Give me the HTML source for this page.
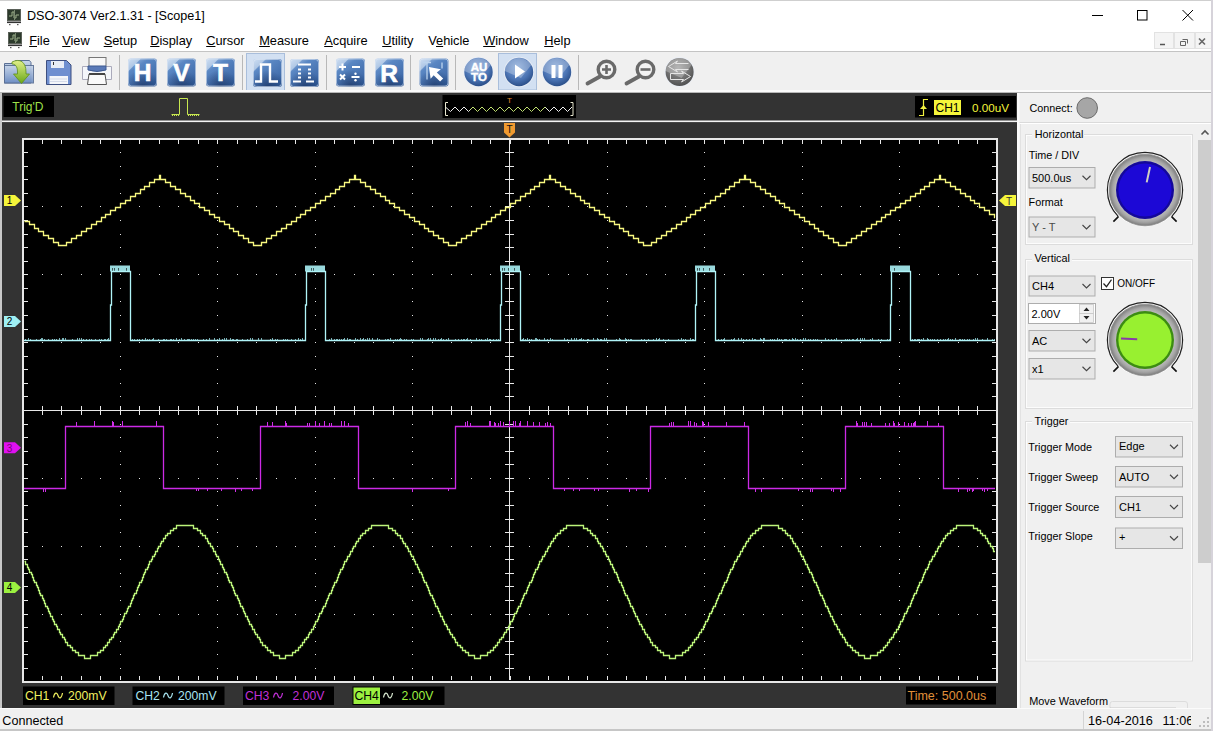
<!DOCTYPE html><html><head><meta charset="utf-8"><style>
*{margin:0;padding:0;box-sizing:border-box}
html,body{width:1213px;height:731px;overflow:hidden;background:#f0f0f0;font-family:"Liberation Sans",sans-serif;position:relative}
.a{position:absolute;white-space:pre}
</style></head><body>
<div class="a" style="left:0;top:0;width:1213px;height:51px;background:#fff"></div>
<div class="a" style="left:0;top:0;width:1213px;height:1px;background:#cfcfcf"></div>
<svg class="a" style="left:6.5px;top:8.5px" width="16" height="17" viewBox="0 0 16 17"><rect x="0.5" y="0.5" width="13" height="11" fill="#2c3a2c" stroke="#5a6058"/><path d="M2 7h3v-4h2v6h2v-3h3" stroke="#9cb08a" stroke-width="1" fill="none"/><rect x="7" y="1" width="1" height="10" fill="#7a8a70"/><rect x="0" y="12.5" width="14" height="1.6" fill="#333"/><rect x="2" y="15" width="1.5" height="1.2" fill="#555"/><rect x="10" y="15" width="1.5" height="1.2" fill="#555"/></svg>
<div class="a" style="left:27px;top:10.13px;font-size:12.6px;line-height:12.6px;color:#000;">DSO-3074 Ver2.1.31 - [Scope1]</div>
<svg class="a" style="left:1085px;top:5px" width="120" height="22" viewBox="1085 5 120 22"><path d="M1092 15.5h11" stroke="#000" stroke-width="1"/><rect x="1137.5" y="10.5" width="9.5" height="9.5" fill="none" stroke="#000" stroke-width="1"/><path d="M1182.5 10l10.5 10.5M1193 10l-10.5 10.5" stroke="#000" stroke-width="1"/></svg>
<svg class="a" style="left:8px;top:32px" width="16" height="17" viewBox="0 0 16 17"><rect x="0.5" y="0.5" width="13" height="11" fill="#2c3a2c" stroke="#5a6058"/><path d="M2 7h3v-4h2v6h2v-3h3" stroke="#9cb08a" stroke-width="1" fill="none"/><rect x="7" y="1" width="1" height="10" fill="#7a8a70"/><rect x="0" y="12.5" width="14" height="1.6" fill="#333"/><rect x="2" y="15" width="1.5" height="1.2" fill="#555"/><rect x="10" y="15" width="1.5" height="1.2" fill="#555"/></svg>
<div class="a" style="left:29.2px;top:35.16px;font-size:12.8px;line-height:12.8px;color:#000;text-underline-offset:0.6px"><u>F</u>ile</div>
<div class="a" style="left:62.2px;top:35.16px;font-size:12.8px;line-height:12.8px;color:#000;text-underline-offset:0.6px"><u>V</u>iew</div>
<div class="a" style="left:103.7px;top:35.16px;font-size:12.8px;line-height:12.8px;color:#000;text-underline-offset:0.6px"><u>S</u>etup</div>
<div class="a" style="left:150.2px;top:35.16px;font-size:12.8px;line-height:12.8px;color:#000;text-underline-offset:0.6px"><u>D</u>isplay</div>
<div class="a" style="left:206.2px;top:35.16px;font-size:12.8px;line-height:12.8px;color:#000;text-underline-offset:0.6px"><u>C</u>ursor</div>
<div class="a" style="left:259.2px;top:35.16px;font-size:12.8px;line-height:12.8px;color:#000;text-underline-offset:0.6px"><u>M</u>easure</div>
<div class="a" style="left:324.2px;top:35.16px;font-size:12.8px;line-height:12.8px;color:#000;text-underline-offset:0.6px"><u>A</u>cquire</div>
<div class="a" style="left:382.2px;top:35.16px;font-size:12.8px;line-height:12.8px;color:#000;text-underline-offset:0.6px"><u>U</u>tility</div>
<div class="a" style="left:428.2px;top:35.16px;font-size:12.8px;line-height:12.8px;color:#000;text-underline-offset:0.6px">V<u>e</u>hicle</div>
<div class="a" style="left:483.2px;top:35.16px;font-size:12.8px;line-height:12.8px;color:#000;text-underline-offset:0.6px"><u>W</u>indow</div>
<div class="a" style="left:544.2px;top:35.16px;font-size:12.8px;line-height:12.8px;color:#000;text-underline-offset:0.6px"><u>H</u>elp</div>
<svg class="a" style="left:1150px;top:30px" width="63" height="21" viewBox="1150 30 63 21"><rect x="1154.5" y="32.5" width="19" height="16" fill="#f4f4f4" stroke="#e2e2e2"/><rect x="1174.5" y="32.5" width="20" height="16" fill="#f4f4f4" stroke="#e2e2e2"/><rect x="1195.5" y="32.5" width="16" height="16" fill="#f4f4f4" stroke="#e2e2e2"/><path d="M1160 44.5h5" stroke="#555" stroke-width="1.5"/><path d="M1180.5 41.5h5v4h-5zM1182.5 39.5h5v4" stroke="#666" stroke-width="1" fill="none"/><path d="M1199 38.5l6 6M1205 38.5l-6 6" stroke="#666" stroke-width="1.6"/></svg>
<div class="a" style="left:0;top:51px;width:1213px;height:1px;background:#c4c4c4"></div>
<div class="a" style="left:0;top:52px;width:1213px;height:41px;background:#f0f0f0"></div>
<svg class="a" style="left:0;top:51px" width="700" height="42" viewBox="0 51 700 42" font-family="Liberation Sans, sans-serif">
<defs>
<linearGradient id="bq" x1="0" y1="0" x2="0.7" y2="1"><stop offset="0" stop-color="#b4cbea"/><stop offset="0.35" stop-color="#5a87c3"/><stop offset="0.8" stop-color="#4570ae"/><stop offset="1" stop-color="#35609e"/></linearGradient>
<radialGradient id="bqs" cx="0.5" cy="1" r="0.6"><stop offset="0" stop-color="#0d2048" stop-opacity="0.55"/><stop offset="1" stop-color="#0d2048" stop-opacity="0"/></radialGradient>
<radialGradient id="cb" cx="0.45" cy="0.35" r="0.7"><stop offset="0" stop-color="#7fa3d6"/><stop offset="0.6" stop-color="#4b74b4"/><stop offset="1" stop-color="#24477f"/></radialGradient>
<radialGradient id="cg" cx="0.45" cy="0.35" r="0.7"><stop offset="0" stop-color="#9a9a9a"/><stop offset="0.6" stop-color="#6e6e6e"/><stop offset="1" stop-color="#4a4a4a"/></radialGradient>
<linearGradient id="fold" x1="0" y1="0" x2="0" y2="1"><stop offset="0" stop-color="#c8d6ea"/><stop offset="1" stop-color="#6f8fc4"/></linearGradient>
<linearGradient id="arr" x1="0" y1="0" x2="0" y2="1"><stop offset="0" stop-color="#e2f08a"/><stop offset="1" stop-color="#6aa818"/></linearGradient>
</defs>
<!-- open -->
<path d="M4.5 63.5h9l2 -3h14l1.5 2v20.5h-26.5z" fill="url(#fold)" stroke="#5a6f94" stroke-width="1"/>
<rect x="4.5" y="65.5" width="29" height="17.5" fill="url(#fold)" stroke="#5a6f94" stroke-width="1" opacity="0.9"/>
<path d="M12 62 C20 58 26 62 26 72 V74 H29.5 L21.5 83.5 L13.5 74 H17.5 V72 C17.5 66 15 64 12 64z" fill="url(#arr)" stroke="#5e8f1a" stroke-width="0.8"/>
<!-- save -->
<path d="M46.5 60.5h20l4.5 4.5v19.5h-24.5z" fill="#6f8fd0" stroke="#3e4f80" stroke-width="1"/>
<rect x="51" y="61" width="13" height="7" fill="#e8edf6"/><rect x="53" y="62" width="1" height="3" fill="#333"/>
<rect x="49.5" y="76" width="18.5" height="8" fill="#f4f6fa"/>
<path d="M50 79h17M50 81.5h17" stroke="#c6cee0" stroke-width="0.7"/>
<!-- print -->
<rect x="89" y="57.5" width="17" height="10" fill="#f8f8f8" stroke="#777" stroke-width="1"/>
<path d="M82.5 66.5h29v13h-29z" fill="#f4f6fa" stroke="#aab" stroke-width="1"/>
<path d="M88 66 h18 v4 q-9 3 -18 0z" fill="#5a7ab8" stroke="#3f5a90"/>
<path d="M89 74 h16 l1.5 10.5 h-19z" fill="#fafafa" stroke="#555" stroke-width="1"/>
<rect x="89" y="73" width="16" height="2" fill="#444"/>
<!-- separators -->
<path d="M119.5 55v35M242.5 55v35M326.5 55v35M410.5 55v35M455.5 55v35M578.5 55v35" stroke="#b8b8b8" stroke-width="1"/>
<!-- H V T -->
<rect x="128" y="58.5" width="29" height="28" rx="3" fill="url(#bq)"/><rect x="128" y="58.5" width="29" height="28" rx="3" fill="url(#bqs)"/><path d="M128 61.5 Q128 58.5 131 58.5 H141 L128 71.5z" fill="#e4eefa" opacity="0.55"/><rect x="128.5" y="59.0" width="28" height="27" rx="3" fill="none" stroke="#dfe8f4" stroke-width="1" opacity="0.6"/>
<text x="142.5" y="81.3" font-size="24.5" font-weight="bold" text-anchor="middle" fill="#fff" stroke="#fff" stroke-width="0.6">H</text>
<rect x="167" y="58.5" width="29" height="28" rx="3" fill="url(#bq)"/><rect x="167" y="58.5" width="29" height="28" rx="3" fill="url(#bqs)"/><path d="M167 61.5 Q167 58.5 170 58.5 H180 L167 71.5z" fill="#e4eefa" opacity="0.55"/><rect x="167.5" y="59.0" width="28" height="27" rx="3" fill="none" stroke="#dfe8f4" stroke-width="1" opacity="0.6"/>
<text x="181.5" y="81.3" font-size="24.5" font-weight="bold" text-anchor="middle" fill="#fff" stroke="#fff" stroke-width="0.6">V</text>
<rect x="206" y="58.5" width="29" height="28" rx="3" fill="url(#bq)"/><rect x="206" y="58.5" width="29" height="28" rx="3" fill="url(#bqs)"/><path d="M206 61.5 Q206 58.5 209 58.5 H219 L206 71.5z" fill="#e4eefa" opacity="0.55"/><rect x="206.5" y="59.0" width="28" height="27" rx="3" fill="none" stroke="#dfe8f4" stroke-width="1" opacity="0.6"/>
<text x="220.5" y="81.3" font-size="24.5" font-weight="bold" text-anchor="middle" fill="#fff" stroke="#fff" stroke-width="0.6">T</text>
<!-- pressed -->
<rect x="246.5" y="53.5" width="38" height="37" fill="#d2e0f2" stroke="#a9bedb" stroke-width="1"/>
<rect x="253" y="59" width="29" height="28" rx="3" fill="url(#bq)"/><rect x="253" y="59" width="29" height="28" rx="3" fill="url(#bqs)"/><path d="M253 62 Q253 59 256 59 H266 L253 72z" fill="#e4eefa" opacity="0.55"/><rect x="253.5" y="59.5" width="28" height="27" rx="3" fill="none" stroke="#dfe8f4" stroke-width="1" opacity="0.6"/>
<path d="M255 81.5h6v-17h9v17h8" stroke="#fff" stroke-width="2.4" fill="none"/>
<rect x="290" y="59" width="29" height="28" rx="3" fill="url(#bq)"/><rect x="290" y="59" width="29" height="28" rx="3" fill="url(#bqs)"/><path d="M290 62 Q290 59 293 59 H303 L290 72z" fill="#e4eefa" opacity="0.55"/><rect x="290.5" y="59.5" width="28" height="27" rx="3" fill="none" stroke="#dfe8f4" stroke-width="1" opacity="0.6"/>
<path d="M293 81.5h8M306 81.5h8M298 64.5h13" stroke="#fff" stroke-width="2" fill="none"/>
<path d="M298 69.5h3M308 69.5h3M298 73.5h3M308 73.5h3M298 77.5h3M308 77.5h3" stroke="#fff" stroke-width="2" fill="none"/>
<!-- math -->
<rect x="336" y="58.5" width="29" height="28" rx="3" fill="url(#bq)"/><rect x="336" y="58.5" width="29" height="28" rx="3" fill="url(#bqs)"/><path d="M336 61.5 Q336 58.5 339 58.5 H349 L336 71.5z" fill="#e4eefa" opacity="0.55"/><rect x="336.5" y="59.0" width="28" height="27" rx="3" fill="none" stroke="#dfe8f4" stroke-width="1" opacity="0.6"/>
<path d="M339 67h7M342.5 63.5v7M352 67h8M340 74.5l5 5M345 74.5l-5 5M351.5 77h8" stroke="#fff" stroke-width="2" fill="none"/>
<circle cx="355.5" cy="73.8" r="1.2" fill="#fff"/><circle cx="355.5" cy="80.2" r="1.2" fill="#fff"/>
<rect x="375" y="58.5" width="29" height="28" rx="3" fill="url(#bq)"/><rect x="375" y="58.5" width="29" height="28" rx="3" fill="url(#bqs)"/><path d="M375 61.5 Q375 58.5 378 58.5 H388 L375 71.5z" fill="#e4eefa" opacity="0.55"/><rect x="375.5" y="59.0" width="28" height="27" rx="3" fill="none" stroke="#dfe8f4" stroke-width="1" opacity="0.6"/>
<text x="389" y="81.5" font-size="24.5" font-weight="bold" text-anchor="middle" fill="#fff" stroke="#fff" stroke-width="0.6">R</text>
<!-- cursor -->
<rect x="419.5" y="58.5" width="29" height="28" rx="3" fill="url(#bq)"/><rect x="419.5" y="58.5" width="29" height="28" rx="3" fill="url(#bqs)"/><path d="M419.5 61.5 Q419.5 58.5 422.5 58.5 H432.5 L419.5 71.5z" fill="#e4eefa" opacity="0.55"/><rect x="420.0" y="59.0" width="28" height="27" rx="3" fill="none" stroke="#dfe8f4" stroke-width="1" opacity="0.6"/>
<path d="M423 62.5h8M427 62.5v17M442 62.5v6" stroke="#bcd4ee" stroke-width="1.3" fill="none"/>
<path d="M430 66 L430 78 L433.5 75 L439 82 L442.5 79.5 L437 72.5 L441.5 70z" fill="#fff" transform="rotate(-8 436 74)"/>
<!-- auto -->
<circle cx="478.5" cy="72" r="15.2" fill="#e8eef6" opacity="0.8"/><circle cx="478.5" cy="72" r="14.2" fill="url(#cb)"/><path d="M464.3 71 L480.5 78 L490.7 65 A14.2 14.2 0 0 0 464.3 71z" fill="#ffffff" opacity="0.28"/>
<text x="479" y="71" font-size="11.5" font-weight="bold" text-anchor="middle" fill="#fff" stroke="#fff" stroke-width="0.4">AU</text>
<text x="479" y="81" font-size="11.5" font-weight="bold" text-anchor="middle" fill="#fff" stroke="#fff" stroke-width="0.4">TO</text>
<rect x="498.5" y="53.5" width="38" height="36.5" fill="#d2e0f2" stroke="#a9bedb" stroke-width="1"/>
<circle cx="519" cy="72" r="15.2" fill="#e8eef6" opacity="0.8"/><circle cx="519" cy="72" r="14.2" fill="url(#cb)"/><path d="M504.8 71 L521 78 L531.2 65 A14.2 14.2 0 0 0 504.8 71z" fill="#ffffff" opacity="0.28"/>
<path d="M515 64.5 L525 71.5 L515 78.5z" fill="#fff"/>
<circle cx="557" cy="72" r="15.2" fill="#e8eef6" opacity="0.8"/><circle cx="557" cy="72" r="14.2" fill="url(#cb)"/><path d="M542.8 71 L559 78 L569.2 65 A14.2 14.2 0 0 0 542.8 71z" fill="#ffffff" opacity="0.28"/>
<rect x="551.5" y="65" width="4" height="13" fill="#fff"/><rect x="558.5" y="65" width="4" height="13" fill="#fff"/>
<!-- zoom -->
<circle cx="606.5" cy="69.5" r="8.3" fill="#f2f2f2" stroke="#6a6a6a" stroke-width="3.4"/>
<path d="M600 76.5 L587.5 83.5" stroke="#6a6a6a" stroke-width="3.8" stroke-linecap="round"/>
<path d="M602 69.5h9M606.5 65v9" stroke="#6a6a6a" stroke-width="2.6"/>
<circle cx="645.5" cy="69.5" r="8.3" fill="#f2f2f2" stroke="#6a6a6a" stroke-width="3.4"/>
<path d="M639 76.5 L626.5 83.5" stroke="#6a6a6a" stroke-width="3.8" stroke-linecap="round"/>
<path d="M640.5 69.5h10" stroke="#6a6a6a" stroke-width="2.6"/>
<circle cx="679.6" cy="72" r="15" fill="#e8eef6" opacity="0.8"/><circle cx="679.6" cy="72" r="14" fill="url(#cg)"/><path d="M665.6 71 L681.6 78 L691.6 65 A14 14 0 0 0 665.6 71z" fill="#ffffff" opacity="0.28"/>
<path d="M688.5 63.5h-13l2 -2.5 -9 5.5 9 5.5 -2 -2.5h13" fill="none" stroke="#e6e6e6" stroke-width="1"/><path d="M670.5 73.5h13l-2 -2.5 9 5.5 -9 5.5 2 -2.5h-13z" fill="none" stroke="#e6e6e6" stroke-width="1"/>
</svg>
<div class="a" style="left:0;top:90px;width:1213px;height:2px;background:#fafafa"></div><div class="a" style="left:0;top:92px;width:1213px;height:1px;background:#b8b8b8"></div>
<svg width="1015" height="615" viewBox="2 93 1015 615" style="position:absolute;left:2px;top:93px" font-family="Liberation Sans, sans-serif">
<defs><linearGradient id="zg" x1="446" x2="572" gradientUnits="userSpaceOnUse"><stop offset="0" stop-color="#f0f0f0"/><stop offset="0.18" stop-color="#f0f0f0"/><stop offset="0.2" stop-color="#c0e070"/><stop offset="0.78" stop-color="#c0e070"/><stop offset="0.8" stop-color="#f0f0f0"/></linearGradient></defs><rect x="2" y="93" width="1015" height="615" fill="#333333"/>
<rect x="2" y="120.5" width="1015" height="1.6" fill="#f4f4f4"/>
<rect x="22" y="138" width="976" height="545" fill="#000"/>
<rect x="23" y="139" width="974" height="543" fill="none" stroke="#e8e8e8" stroke-width="2"/>
<g fill="#e4e4e4" shape-rendering="crispEdges"><rect x="120" y="152" width="1" height="1"/><rect x="120" y="166" width="1" height="1"/><rect x="120" y="179" width="1" height="1"/><rect x="120" y="193" width="1" height="1"/><rect x="120" y="206" width="1" height="1"/><rect x="120" y="220" width="1" height="1"/><rect x="120" y="234" width="1" height="1"/><rect x="120" y="247" width="1" height="1"/><rect x="120" y="261" width="1" height="1"/><rect x="120" y="274" width="1" height="1"/><rect x="120" y="288" width="1" height="1"/><rect x="120" y="301" width="1" height="1"/><rect x="120" y="315" width="1" height="1"/><rect x="120" y="329" width="1" height="1"/><rect x="120" y="342" width="1" height="1"/><rect x="120" y="356" width="1" height="1"/><rect x="120" y="369" width="1" height="1"/><rect x="120" y="383" width="1" height="1"/><rect x="120" y="396" width="1" height="1"/><rect x="120" y="410" width="1" height="1"/><rect x="120" y="424" width="1" height="1"/><rect x="120" y="437" width="1" height="1"/><rect x="120" y="451" width="1" height="1"/><rect x="120" y="464" width="1" height="1"/><rect x="120" y="478" width="1" height="1"/><rect x="120" y="491" width="1" height="1"/><rect x="120" y="505" width="1" height="1"/><rect x="120" y="519" width="1" height="1"/><rect x="120" y="532" width="1" height="1"/><rect x="120" y="546" width="1" height="1"/><rect x="120" y="559" width="1" height="1"/><rect x="120" y="573" width="1" height="1"/><rect x="120" y="586" width="1" height="1"/><rect x="120" y="600" width="1" height="1"/><rect x="120" y="614" width="1" height="1"/><rect x="120" y="627" width="1" height="1"/><rect x="120" y="641" width="1" height="1"/><rect x="120" y="654" width="1" height="1"/><rect x="120" y="668" width="1" height="1"/><rect x="217" y="152" width="1" height="1"/><rect x="217" y="166" width="1" height="1"/><rect x="217" y="179" width="1" height="1"/><rect x="217" y="193" width="1" height="1"/><rect x="217" y="206" width="1" height="1"/><rect x="217" y="220" width="1" height="1"/><rect x="217" y="234" width="1" height="1"/><rect x="217" y="247" width="1" height="1"/><rect x="217" y="261" width="1" height="1"/><rect x="217" y="274" width="1" height="1"/><rect x="217" y="288" width="1" height="1"/><rect x="217" y="301" width="1" height="1"/><rect x="217" y="315" width="1" height="1"/><rect x="217" y="329" width="1" height="1"/><rect x="217" y="342" width="1" height="1"/><rect x="217" y="356" width="1" height="1"/><rect x="217" y="369" width="1" height="1"/><rect x="217" y="383" width="1" height="1"/><rect x="217" y="396" width="1" height="1"/><rect x="217" y="410" width="1" height="1"/><rect x="217" y="424" width="1" height="1"/><rect x="217" y="437" width="1" height="1"/><rect x="217" y="451" width="1" height="1"/><rect x="217" y="464" width="1" height="1"/><rect x="217" y="478" width="1" height="1"/><rect x="217" y="491" width="1" height="1"/><rect x="217" y="505" width="1" height="1"/><rect x="217" y="519" width="1" height="1"/><rect x="217" y="532" width="1" height="1"/><rect x="217" y="546" width="1" height="1"/><rect x="217" y="559" width="1" height="1"/><rect x="217" y="573" width="1" height="1"/><rect x="217" y="586" width="1" height="1"/><rect x="217" y="600" width="1" height="1"/><rect x="217" y="614" width="1" height="1"/><rect x="217" y="627" width="1" height="1"/><rect x="217" y="641" width="1" height="1"/><rect x="217" y="654" width="1" height="1"/><rect x="217" y="668" width="1" height="1"/><rect x="315" y="152" width="1" height="1"/><rect x="315" y="166" width="1" height="1"/><rect x="315" y="179" width="1" height="1"/><rect x="315" y="193" width="1" height="1"/><rect x="315" y="206" width="1" height="1"/><rect x="315" y="220" width="1" height="1"/><rect x="315" y="234" width="1" height="1"/><rect x="315" y="247" width="1" height="1"/><rect x="315" y="261" width="1" height="1"/><rect x="315" y="274" width="1" height="1"/><rect x="315" y="288" width="1" height="1"/><rect x="315" y="301" width="1" height="1"/><rect x="315" y="315" width="1" height="1"/><rect x="315" y="329" width="1" height="1"/><rect x="315" y="342" width="1" height="1"/><rect x="315" y="356" width="1" height="1"/><rect x="315" y="369" width="1" height="1"/><rect x="315" y="383" width="1" height="1"/><rect x="315" y="396" width="1" height="1"/><rect x="315" y="410" width="1" height="1"/><rect x="315" y="424" width="1" height="1"/><rect x="315" y="437" width="1" height="1"/><rect x="315" y="451" width="1" height="1"/><rect x="315" y="464" width="1" height="1"/><rect x="315" y="478" width="1" height="1"/><rect x="315" y="491" width="1" height="1"/><rect x="315" y="505" width="1" height="1"/><rect x="315" y="519" width="1" height="1"/><rect x="315" y="532" width="1" height="1"/><rect x="315" y="546" width="1" height="1"/><rect x="315" y="559" width="1" height="1"/><rect x="315" y="573" width="1" height="1"/><rect x="315" y="586" width="1" height="1"/><rect x="315" y="600" width="1" height="1"/><rect x="315" y="614" width="1" height="1"/><rect x="315" y="627" width="1" height="1"/><rect x="315" y="641" width="1" height="1"/><rect x="315" y="654" width="1" height="1"/><rect x="315" y="668" width="1" height="1"/><rect x="412" y="152" width="1" height="1"/><rect x="412" y="166" width="1" height="1"/><rect x="412" y="179" width="1" height="1"/><rect x="412" y="193" width="1" height="1"/><rect x="412" y="206" width="1" height="1"/><rect x="412" y="220" width="1" height="1"/><rect x="412" y="234" width="1" height="1"/><rect x="412" y="247" width="1" height="1"/><rect x="412" y="261" width="1" height="1"/><rect x="412" y="274" width="1" height="1"/><rect x="412" y="288" width="1" height="1"/><rect x="412" y="301" width="1" height="1"/><rect x="412" y="315" width="1" height="1"/><rect x="412" y="329" width="1" height="1"/><rect x="412" y="342" width="1" height="1"/><rect x="412" y="356" width="1" height="1"/><rect x="412" y="369" width="1" height="1"/><rect x="412" y="383" width="1" height="1"/><rect x="412" y="396" width="1" height="1"/><rect x="412" y="410" width="1" height="1"/><rect x="412" y="424" width="1" height="1"/><rect x="412" y="437" width="1" height="1"/><rect x="412" y="451" width="1" height="1"/><rect x="412" y="464" width="1" height="1"/><rect x="412" y="478" width="1" height="1"/><rect x="412" y="491" width="1" height="1"/><rect x="412" y="505" width="1" height="1"/><rect x="412" y="519" width="1" height="1"/><rect x="412" y="532" width="1" height="1"/><rect x="412" y="546" width="1" height="1"/><rect x="412" y="559" width="1" height="1"/><rect x="412" y="573" width="1" height="1"/><rect x="412" y="586" width="1" height="1"/><rect x="412" y="600" width="1" height="1"/><rect x="412" y="614" width="1" height="1"/><rect x="412" y="627" width="1" height="1"/><rect x="412" y="641" width="1" height="1"/><rect x="412" y="654" width="1" height="1"/><rect x="412" y="668" width="1" height="1"/><rect x="607" y="152" width="1" height="1"/><rect x="607" y="166" width="1" height="1"/><rect x="607" y="179" width="1" height="1"/><rect x="607" y="193" width="1" height="1"/><rect x="607" y="206" width="1" height="1"/><rect x="607" y="220" width="1" height="1"/><rect x="607" y="234" width="1" height="1"/><rect x="607" y="247" width="1" height="1"/><rect x="607" y="261" width="1" height="1"/><rect x="607" y="274" width="1" height="1"/><rect x="607" y="288" width="1" height="1"/><rect x="607" y="301" width="1" height="1"/><rect x="607" y="315" width="1" height="1"/><rect x="607" y="329" width="1" height="1"/><rect x="607" y="342" width="1" height="1"/><rect x="607" y="356" width="1" height="1"/><rect x="607" y="369" width="1" height="1"/><rect x="607" y="383" width="1" height="1"/><rect x="607" y="396" width="1" height="1"/><rect x="607" y="410" width="1" height="1"/><rect x="607" y="424" width="1" height="1"/><rect x="607" y="437" width="1" height="1"/><rect x="607" y="451" width="1" height="1"/><rect x="607" y="464" width="1" height="1"/><rect x="607" y="478" width="1" height="1"/><rect x="607" y="491" width="1" height="1"/><rect x="607" y="505" width="1" height="1"/><rect x="607" y="519" width="1" height="1"/><rect x="607" y="532" width="1" height="1"/><rect x="607" y="546" width="1" height="1"/><rect x="607" y="559" width="1" height="1"/><rect x="607" y="573" width="1" height="1"/><rect x="607" y="586" width="1" height="1"/><rect x="607" y="600" width="1" height="1"/><rect x="607" y="614" width="1" height="1"/><rect x="607" y="627" width="1" height="1"/><rect x="607" y="641" width="1" height="1"/><rect x="607" y="654" width="1" height="1"/><rect x="607" y="668" width="1" height="1"/><rect x="704" y="152" width="1" height="1"/><rect x="704" y="166" width="1" height="1"/><rect x="704" y="179" width="1" height="1"/><rect x="704" y="193" width="1" height="1"/><rect x="704" y="206" width="1" height="1"/><rect x="704" y="220" width="1" height="1"/><rect x="704" y="234" width="1" height="1"/><rect x="704" y="247" width="1" height="1"/><rect x="704" y="261" width="1" height="1"/><rect x="704" y="274" width="1" height="1"/><rect x="704" y="288" width="1" height="1"/><rect x="704" y="301" width="1" height="1"/><rect x="704" y="315" width="1" height="1"/><rect x="704" y="329" width="1" height="1"/><rect x="704" y="342" width="1" height="1"/><rect x="704" y="356" width="1" height="1"/><rect x="704" y="369" width="1" height="1"/><rect x="704" y="383" width="1" height="1"/><rect x="704" y="396" width="1" height="1"/><rect x="704" y="410" width="1" height="1"/><rect x="704" y="424" width="1" height="1"/><rect x="704" y="437" width="1" height="1"/><rect x="704" y="451" width="1" height="1"/><rect x="704" y="464" width="1" height="1"/><rect x="704" y="478" width="1" height="1"/><rect x="704" y="491" width="1" height="1"/><rect x="704" y="505" width="1" height="1"/><rect x="704" y="519" width="1" height="1"/><rect x="704" y="532" width="1" height="1"/><rect x="704" y="546" width="1" height="1"/><rect x="704" y="559" width="1" height="1"/><rect x="704" y="573" width="1" height="1"/><rect x="704" y="586" width="1" height="1"/><rect x="704" y="600" width="1" height="1"/><rect x="704" y="614" width="1" height="1"/><rect x="704" y="627" width="1" height="1"/><rect x="704" y="641" width="1" height="1"/><rect x="704" y="654" width="1" height="1"/><rect x="704" y="668" width="1" height="1"/><rect x="802" y="152" width="1" height="1"/><rect x="802" y="166" width="1" height="1"/><rect x="802" y="179" width="1" height="1"/><rect x="802" y="193" width="1" height="1"/><rect x="802" y="206" width="1" height="1"/><rect x="802" y="220" width="1" height="1"/><rect x="802" y="234" width="1" height="1"/><rect x="802" y="247" width="1" height="1"/><rect x="802" y="261" width="1" height="1"/><rect x="802" y="274" width="1" height="1"/><rect x="802" y="288" width="1" height="1"/><rect x="802" y="301" width="1" height="1"/><rect x="802" y="315" width="1" height="1"/><rect x="802" y="329" width="1" height="1"/><rect x="802" y="342" width="1" height="1"/><rect x="802" y="356" width="1" height="1"/><rect x="802" y="369" width="1" height="1"/><rect x="802" y="383" width="1" height="1"/><rect x="802" y="396" width="1" height="1"/><rect x="802" y="410" width="1" height="1"/><rect x="802" y="424" width="1" height="1"/><rect x="802" y="437" width="1" height="1"/><rect x="802" y="451" width="1" height="1"/><rect x="802" y="464" width="1" height="1"/><rect x="802" y="478" width="1" height="1"/><rect x="802" y="491" width="1" height="1"/><rect x="802" y="505" width="1" height="1"/><rect x="802" y="519" width="1" height="1"/><rect x="802" y="532" width="1" height="1"/><rect x="802" y="546" width="1" height="1"/><rect x="802" y="559" width="1" height="1"/><rect x="802" y="573" width="1" height="1"/><rect x="802" y="586" width="1" height="1"/><rect x="802" y="600" width="1" height="1"/><rect x="802" y="614" width="1" height="1"/><rect x="802" y="627" width="1" height="1"/><rect x="802" y="641" width="1" height="1"/><rect x="802" y="654" width="1" height="1"/><rect x="802" y="668" width="1" height="1"/><rect x="899" y="152" width="1" height="1"/><rect x="899" y="166" width="1" height="1"/><rect x="899" y="179" width="1" height="1"/><rect x="899" y="193" width="1" height="1"/><rect x="899" y="206" width="1" height="1"/><rect x="899" y="220" width="1" height="1"/><rect x="899" y="234" width="1" height="1"/><rect x="899" y="247" width="1" height="1"/><rect x="899" y="261" width="1" height="1"/><rect x="899" y="274" width="1" height="1"/><rect x="899" y="288" width="1" height="1"/><rect x="899" y="301" width="1" height="1"/><rect x="899" y="315" width="1" height="1"/><rect x="899" y="329" width="1" height="1"/><rect x="899" y="342" width="1" height="1"/><rect x="899" y="356" width="1" height="1"/><rect x="899" y="369" width="1" height="1"/><rect x="899" y="383" width="1" height="1"/><rect x="899" y="396" width="1" height="1"/><rect x="899" y="410" width="1" height="1"/><rect x="899" y="424" width="1" height="1"/><rect x="899" y="437" width="1" height="1"/><rect x="899" y="451" width="1" height="1"/><rect x="899" y="464" width="1" height="1"/><rect x="899" y="478" width="1" height="1"/><rect x="899" y="491" width="1" height="1"/><rect x="899" y="505" width="1" height="1"/><rect x="899" y="519" width="1" height="1"/><rect x="899" y="532" width="1" height="1"/><rect x="899" y="546" width="1" height="1"/><rect x="899" y="559" width="1" height="1"/><rect x="899" y="573" width="1" height="1"/><rect x="899" y="586" width="1" height="1"/><rect x="899" y="600" width="1" height="1"/><rect x="899" y="614" width="1" height="1"/><rect x="899" y="627" width="1" height="1"/><rect x="899" y="641" width="1" height="1"/><rect x="899" y="654" width="1" height="1"/><rect x="899" y="668" width="1" height="1"/><rect x="42" y="206" width="1" height="1"/><rect x="61" y="206" width="1" height="1"/><rect x="81" y="206" width="1" height="1"/><rect x="100" y="206" width="1" height="1"/><rect x="120" y="206" width="1" height="1"/><rect x="139" y="206" width="1" height="1"/><rect x="159" y="206" width="1" height="1"/><rect x="178" y="206" width="1" height="1"/><rect x="198" y="206" width="1" height="1"/><rect x="217" y="206" width="1" height="1"/><rect x="237" y="206" width="1" height="1"/><rect x="256" y="206" width="1" height="1"/><rect x="276" y="206" width="1" height="1"/><rect x="295" y="206" width="1" height="1"/><rect x="315" y="206" width="1" height="1"/><rect x="334" y="206" width="1" height="1"/><rect x="354" y="206" width="1" height="1"/><rect x="373" y="206" width="1" height="1"/><rect x="393" y="206" width="1" height="1"/><rect x="412" y="206" width="1" height="1"/><rect x="432" y="206" width="1" height="1"/><rect x="451" y="206" width="1" height="1"/><rect x="471" y="206" width="1" height="1"/><rect x="490" y="206" width="1" height="1"/><rect x="510" y="206" width="1" height="1"/><rect x="529" y="206" width="1" height="1"/><rect x="548" y="206" width="1" height="1"/><rect x="568" y="206" width="1" height="1"/><rect x="587" y="206" width="1" height="1"/><rect x="607" y="206" width="1" height="1"/><rect x="626" y="206" width="1" height="1"/><rect x="646" y="206" width="1" height="1"/><rect x="665" y="206" width="1" height="1"/><rect x="685" y="206" width="1" height="1"/><rect x="704" y="206" width="1" height="1"/><rect x="724" y="206" width="1" height="1"/><rect x="743" y="206" width="1" height="1"/><rect x="763" y="206" width="1" height="1"/><rect x="782" y="206" width="1" height="1"/><rect x="802" y="206" width="1" height="1"/><rect x="821" y="206" width="1" height="1"/><rect x="841" y="206" width="1" height="1"/><rect x="860" y="206" width="1" height="1"/><rect x="880" y="206" width="1" height="1"/><rect x="899" y="206" width="1" height="1"/><rect x="919" y="206" width="1" height="1"/><rect x="938" y="206" width="1" height="1"/><rect x="958" y="206" width="1" height="1"/><rect x="977" y="206" width="1" height="1"/><rect x="42" y="274" width="1" height="1"/><rect x="61" y="274" width="1" height="1"/><rect x="81" y="274" width="1" height="1"/><rect x="100" y="274" width="1" height="1"/><rect x="120" y="274" width="1" height="1"/><rect x="139" y="274" width="1" height="1"/><rect x="159" y="274" width="1" height="1"/><rect x="178" y="274" width="1" height="1"/><rect x="198" y="274" width="1" height="1"/><rect x="217" y="274" width="1" height="1"/><rect x="237" y="274" width="1" height="1"/><rect x="256" y="274" width="1" height="1"/><rect x="276" y="274" width="1" height="1"/><rect x="295" y="274" width="1" height="1"/><rect x="315" y="274" width="1" height="1"/><rect x="334" y="274" width="1" height="1"/><rect x="354" y="274" width="1" height="1"/><rect x="373" y="274" width="1" height="1"/><rect x="393" y="274" width="1" height="1"/><rect x="412" y="274" width="1" height="1"/><rect x="432" y="274" width="1" height="1"/><rect x="451" y="274" width="1" height="1"/><rect x="471" y="274" width="1" height="1"/><rect x="490" y="274" width="1" height="1"/><rect x="510" y="274" width="1" height="1"/><rect x="529" y="274" width="1" height="1"/><rect x="548" y="274" width="1" height="1"/><rect x="568" y="274" width="1" height="1"/><rect x="587" y="274" width="1" height="1"/><rect x="607" y="274" width="1" height="1"/><rect x="626" y="274" width="1" height="1"/><rect x="646" y="274" width="1" height="1"/><rect x="665" y="274" width="1" height="1"/><rect x="685" y="274" width="1" height="1"/><rect x="704" y="274" width="1" height="1"/><rect x="724" y="274" width="1" height="1"/><rect x="743" y="274" width="1" height="1"/><rect x="763" y="274" width="1" height="1"/><rect x="782" y="274" width="1" height="1"/><rect x="802" y="274" width="1" height="1"/><rect x="821" y="274" width="1" height="1"/><rect x="841" y="274" width="1" height="1"/><rect x="860" y="274" width="1" height="1"/><rect x="880" y="274" width="1" height="1"/><rect x="899" y="274" width="1" height="1"/><rect x="919" y="274" width="1" height="1"/><rect x="938" y="274" width="1" height="1"/><rect x="958" y="274" width="1" height="1"/><rect x="977" y="274" width="1" height="1"/><rect x="42" y="342" width="1" height="1"/><rect x="61" y="342" width="1" height="1"/><rect x="81" y="342" width="1" height="1"/><rect x="100" y="342" width="1" height="1"/><rect x="120" y="342" width="1" height="1"/><rect x="139" y="342" width="1" height="1"/><rect x="159" y="342" width="1" height="1"/><rect x="178" y="342" width="1" height="1"/><rect x="198" y="342" width="1" height="1"/><rect x="217" y="342" width="1" height="1"/><rect x="237" y="342" width="1" height="1"/><rect x="256" y="342" width="1" height="1"/><rect x="276" y="342" width="1" height="1"/><rect x="295" y="342" width="1" height="1"/><rect x="315" y="342" width="1" height="1"/><rect x="334" y="342" width="1" height="1"/><rect x="354" y="342" width="1" height="1"/><rect x="373" y="342" width="1" height="1"/><rect x="393" y="342" width="1" height="1"/><rect x="412" y="342" width="1" height="1"/><rect x="432" y="342" width="1" height="1"/><rect x="451" y="342" width="1" height="1"/><rect x="471" y="342" width="1" height="1"/><rect x="490" y="342" width="1" height="1"/><rect x="510" y="342" width="1" height="1"/><rect x="529" y="342" width="1" height="1"/><rect x="548" y="342" width="1" height="1"/><rect x="568" y="342" width="1" height="1"/><rect x="587" y="342" width="1" height="1"/><rect x="607" y="342" width="1" height="1"/><rect x="626" y="342" width="1" height="1"/><rect x="646" y="342" width="1" height="1"/><rect x="665" y="342" width="1" height="1"/><rect x="685" y="342" width="1" height="1"/><rect x="704" y="342" width="1" height="1"/><rect x="724" y="342" width="1" height="1"/><rect x="743" y="342" width="1" height="1"/><rect x="763" y="342" width="1" height="1"/><rect x="782" y="342" width="1" height="1"/><rect x="802" y="342" width="1" height="1"/><rect x="821" y="342" width="1" height="1"/><rect x="841" y="342" width="1" height="1"/><rect x="860" y="342" width="1" height="1"/><rect x="880" y="342" width="1" height="1"/><rect x="899" y="342" width="1" height="1"/><rect x="919" y="342" width="1" height="1"/><rect x="938" y="342" width="1" height="1"/><rect x="958" y="342" width="1" height="1"/><rect x="977" y="342" width="1" height="1"/><rect x="42" y="478" width="1" height="1"/><rect x="61" y="478" width="1" height="1"/><rect x="81" y="478" width="1" height="1"/><rect x="100" y="478" width="1" height="1"/><rect x="120" y="478" width="1" height="1"/><rect x="139" y="478" width="1" height="1"/><rect x="159" y="478" width="1" height="1"/><rect x="178" y="478" width="1" height="1"/><rect x="198" y="478" width="1" height="1"/><rect x="217" y="478" width="1" height="1"/><rect x="237" y="478" width="1" height="1"/><rect x="256" y="478" width="1" height="1"/><rect x="276" y="478" width="1" height="1"/><rect x="295" y="478" width="1" height="1"/><rect x="315" y="478" width="1" height="1"/><rect x="334" y="478" width="1" height="1"/><rect x="354" y="478" width="1" height="1"/><rect x="373" y="478" width="1" height="1"/><rect x="393" y="478" width="1" height="1"/><rect x="412" y="478" width="1" height="1"/><rect x="432" y="478" width="1" height="1"/><rect x="451" y="478" width="1" height="1"/><rect x="471" y="478" width="1" height="1"/><rect x="490" y="478" width="1" height="1"/><rect x="510" y="478" width="1" height="1"/><rect x="529" y="478" width="1" height="1"/><rect x="548" y="478" width="1" height="1"/><rect x="568" y="478" width="1" height="1"/><rect x="587" y="478" width="1" height="1"/><rect x="607" y="478" width="1" height="1"/><rect x="626" y="478" width="1" height="1"/><rect x="646" y="478" width="1" height="1"/><rect x="665" y="478" width="1" height="1"/><rect x="685" y="478" width="1" height="1"/><rect x="704" y="478" width="1" height="1"/><rect x="724" y="478" width="1" height="1"/><rect x="743" y="478" width="1" height="1"/><rect x="763" y="478" width="1" height="1"/><rect x="782" y="478" width="1" height="1"/><rect x="802" y="478" width="1" height="1"/><rect x="821" y="478" width="1" height="1"/><rect x="841" y="478" width="1" height="1"/><rect x="860" y="478" width="1" height="1"/><rect x="880" y="478" width="1" height="1"/><rect x="899" y="478" width="1" height="1"/><rect x="919" y="478" width="1" height="1"/><rect x="938" y="478" width="1" height="1"/><rect x="958" y="478" width="1" height="1"/><rect x="977" y="478" width="1" height="1"/><rect x="42" y="546" width="1" height="1"/><rect x="61" y="546" width="1" height="1"/><rect x="81" y="546" width="1" height="1"/><rect x="100" y="546" width="1" height="1"/><rect x="120" y="546" width="1" height="1"/><rect x="139" y="546" width="1" height="1"/><rect x="159" y="546" width="1" height="1"/><rect x="178" y="546" width="1" height="1"/><rect x="198" y="546" width="1" height="1"/><rect x="217" y="546" width="1" height="1"/><rect x="237" y="546" width="1" height="1"/><rect x="256" y="546" width="1" height="1"/><rect x="276" y="546" width="1" height="1"/><rect x="295" y="546" width="1" height="1"/><rect x="315" y="546" width="1" height="1"/><rect x="334" y="546" width="1" height="1"/><rect x="354" y="546" width="1" height="1"/><rect x="373" y="546" width="1" height="1"/><rect x="393" y="546" width="1" height="1"/><rect x="412" y="546" width="1" height="1"/><rect x="432" y="546" width="1" height="1"/><rect x="451" y="546" width="1" height="1"/><rect x="471" y="546" width="1" height="1"/><rect x="490" y="546" width="1" height="1"/><rect x="510" y="546" width="1" height="1"/><rect x="529" y="546" width="1" height="1"/><rect x="548" y="546" width="1" height="1"/><rect x="568" y="546" width="1" height="1"/><rect x="587" y="546" width="1" height="1"/><rect x="607" y="546" width="1" height="1"/><rect x="626" y="546" width="1" height="1"/><rect x="646" y="546" width="1" height="1"/><rect x="665" y="546" width="1" height="1"/><rect x="685" y="546" width="1" height="1"/><rect x="704" y="546" width="1" height="1"/><rect x="724" y="546" width="1" height="1"/><rect x="743" y="546" width="1" height="1"/><rect x="763" y="546" width="1" height="1"/><rect x="782" y="546" width="1" height="1"/><rect x="802" y="546" width="1" height="1"/><rect x="821" y="546" width="1" height="1"/><rect x="841" y="546" width="1" height="1"/><rect x="860" y="546" width="1" height="1"/><rect x="880" y="546" width="1" height="1"/><rect x="899" y="546" width="1" height="1"/><rect x="919" y="546" width="1" height="1"/><rect x="938" y="546" width="1" height="1"/><rect x="958" y="546" width="1" height="1"/><rect x="977" y="546" width="1" height="1"/><rect x="42" y="614" width="1" height="1"/><rect x="61" y="614" width="1" height="1"/><rect x="81" y="614" width="1" height="1"/><rect x="100" y="614" width="1" height="1"/><rect x="120" y="614" width="1" height="1"/><rect x="139" y="614" width="1" height="1"/><rect x="159" y="614" width="1" height="1"/><rect x="178" y="614" width="1" height="1"/><rect x="198" y="614" width="1" height="1"/><rect x="217" y="614" width="1" height="1"/><rect x="237" y="614" width="1" height="1"/><rect x="256" y="614" width="1" height="1"/><rect x="276" y="614" width="1" height="1"/><rect x="295" y="614" width="1" height="1"/><rect x="315" y="614" width="1" height="1"/><rect x="334" y="614" width="1" height="1"/><rect x="354" y="614" width="1" height="1"/><rect x="373" y="614" width="1" height="1"/><rect x="393" y="614" width="1" height="1"/><rect x="412" y="614" width="1" height="1"/><rect x="432" y="614" width="1" height="1"/><rect x="451" y="614" width="1" height="1"/><rect x="471" y="614" width="1" height="1"/><rect x="490" y="614" width="1" height="1"/><rect x="510" y="614" width="1" height="1"/><rect x="529" y="614" width="1" height="1"/><rect x="548" y="614" width="1" height="1"/><rect x="568" y="614" width="1" height="1"/><rect x="587" y="614" width="1" height="1"/><rect x="607" y="614" width="1" height="1"/><rect x="626" y="614" width="1" height="1"/><rect x="646" y="614" width="1" height="1"/><rect x="665" y="614" width="1" height="1"/><rect x="685" y="614" width="1" height="1"/><rect x="704" y="614" width="1" height="1"/><rect x="724" y="614" width="1" height="1"/><rect x="743" y="614" width="1" height="1"/><rect x="763" y="614" width="1" height="1"/><rect x="782" y="614" width="1" height="1"/><rect x="802" y="614" width="1" height="1"/><rect x="821" y="614" width="1" height="1"/><rect x="841" y="614" width="1" height="1"/><rect x="860" y="614" width="1" height="1"/><rect x="880" y="614" width="1" height="1"/><rect x="899" y="614" width="1" height="1"/><rect x="919" y="614" width="1" height="1"/><rect x="938" y="614" width="1" height="1"/><rect x="958" y="614" width="1" height="1"/><rect x="977" y="614" width="1" height="1"/></g>
<path d="M42.5 140v4M42.5 680v-4M61.5 140v4M61.5 680v-4M81.5 140v4M81.5 680v-4M100.5 140v4M100.5 680v-4M120.5 140v4M120.5 680v-4M139.5 140v4M139.5 680v-4M159.5 140v4M159.5 680v-4M178.5 140v4M178.5 680v-4M198.5 140v4M198.5 680v-4M217.5 140v4M217.5 680v-4M237.5 140v4M237.5 680v-4M256.5 140v4M256.5 680v-4M276.5 140v4M276.5 680v-4M295.5 140v4M295.5 680v-4M315.5 140v4M315.5 680v-4M334.5 140v4M334.5 680v-4M354.5 140v4M354.5 680v-4M373.5 140v4M373.5 680v-4M393.5 140v4M393.5 680v-4M412.5 140v4M412.5 680v-4M432.5 140v4M432.5 680v-4M451.5 140v4M451.5 680v-4M471.5 140v4M471.5 680v-4M490.5 140v4M490.5 680v-4M510.5 140v4M510.5 680v-4M529.5 140v4M529.5 680v-4M548.5 140v4M548.5 680v-4M568.5 140v4M568.5 680v-4M587.5 140v4M587.5 680v-4M607.5 140v4M607.5 680v-4M626.5 140v4M626.5 680v-4M646.5 140v4M646.5 680v-4M665.5 140v4M665.5 680v-4M685.5 140v4M685.5 680v-4M704.5 140v4M704.5 680v-4M724.5 140v4M724.5 680v-4M743.5 140v4M743.5 680v-4M763.5 140v4M763.5 680v-4M782.5 140v4M782.5 680v-4M802.5 140v4M802.5 680v-4M821.5 140v4M821.5 680v-4M841.5 140v4M841.5 680v-4M860.5 140v4M860.5 680v-4M880.5 140v4M880.5 680v-4M899.5 140v4M899.5 680v-4M919.5 140v4M919.5 680v-4M938.5 140v4M938.5 680v-4M958.5 140v4M958.5 680v-4M977.5 140v4M977.5 680v-4M24 152.5h4M996 152.5h-4M24 166.5h4M996 166.5h-4M24 179.5h4M996 179.5h-4M24 193.5h4M996 193.5h-4M24 206.5h4M996 206.5h-4M24 220.5h4M996 220.5h-4M24 234.5h4M996 234.5h-4M24 247.5h4M996 247.5h-4M24 261.5h4M996 261.5h-4M24 274.5h4M996 274.5h-4M24 288.5h4M996 288.5h-4M24 301.5h4M996 301.5h-4M24 315.5h4M996 315.5h-4M24 329.5h4M996 329.5h-4M24 342.5h4M996 342.5h-4M24 356.5h4M996 356.5h-4M24 369.5h4M996 369.5h-4M24 383.5h4M996 383.5h-4M24 396.5h4M996 396.5h-4M24 410.5h4M996 410.5h-4M24 424.5h4M996 424.5h-4M24 437.5h4M996 437.5h-4M24 451.5h4M996 451.5h-4M24 464.5h4M996 464.5h-4M24 478.5h4M996 478.5h-4M24 491.5h4M996 491.5h-4M24 505.5h4M996 505.5h-4M24 519.5h4M996 519.5h-4M24 532.5h4M996 532.5h-4M24 546.5h4M996 546.5h-4M24 559.5h4M996 559.5h-4M24 573.5h4M996 573.5h-4M24 586.5h4M996 586.5h-4M24 600.5h4M996 600.5h-4M24 614.5h4M996 614.5h-4M24 627.5h4M996 627.5h-4M24 641.5h4M996 641.5h-4M24 654.5h4M996 654.5h-4M24 668.5h4M996 668.5h-4M42.5 406v9M61.5 406v9M81.5 406v9M100.5 406v9M120.5 406v9M139.5 406v9M159.5 406v9M178.5 406v9M198.5 406v9M217.5 406v9M237.5 406v9M256.5 406v9M276.5 406v9M295.5 406v9M315.5 406v9M334.5 406v9M354.5 406v9M373.5 406v9M393.5 406v9M412.5 406v9M432.5 406v9M451.5 406v9M471.5 406v9M490.5 406v9M529.5 406v9M548.5 406v9M568.5 406v9M587.5 406v9M607.5 406v9M626.5 406v9M646.5 406v9M665.5 406v9M685.5 406v9M704.5 406v9M724.5 406v9M743.5 406v9M763.5 406v9M782.5 406v9M802.5 406v9M821.5 406v9M841.5 406v9M860.5 406v9M880.5 406v9M899.5 406v9M919.5 406v9M938.5 406v9M958.5 406v9M977.5 406v9M505 152.5h9M505 166.5h9M505 179.5h9M505 193.5h9M505 206.5h9M505 220.5h9M505 234.5h9M505 247.5h9M505 261.5h9M505 274.5h9M505 288.5h9M505 301.5h9M505 315.5h9M505 329.5h9M505 342.5h9M505 356.5h9M505 369.5h9M505 383.5h9M505 396.5h9M505 424.5h9M505 437.5h9M505 451.5h9M505 464.5h9M505 478.5h9M505 491.5h9M505 505.5h9M505 519.5h9M505 532.5h9M505 546.5h9M505 559.5h9M505 573.5h9M505 586.5h9M505 600.5h9M505 614.5h9M505 627.5h9M505 641.5h9M505 654.5h9M505 668.5h9" stroke="#e8e8e8" stroke-width="1" fill="none"/>
<path d="M509.5 140V680M24 410.5H996" stroke="#e8e8e8" stroke-width="1" fill="none"/>
<path d="M25.5 340v-1M28.5 340v-2M30.5 340v-1M36.5 340v-1M40.5 340v-1M41.5 340v-2M42.5 340v-2M44.5 340v-1M48.5 340v-1M52.5 340v-1M54.5 340v-1M56.5 340v-1M59.5 340v-2M62.5 340v-2M63.5 340v-2M65.5 340v-2M72.5 340v-1M77.5 340v-2M79.5 340v-2M81.5 340v-2M83.5 340v-1M86.5 340v-1M89.5 340v-1M91.5 340v-1M95.5 340v-1M99.5 340v-1M101.5 340v-1M104.5 340v-1M105.5 340v-1M107.5 340v-1M108.5 340v-2M132.5 340v-1M134.5 340v-1M137.5 340v-1M139.5 340v-1M142.5 340v-1M145.5 340v-2M147.5 340v-1M149.5 340v-1M152.5 340v-1M153.5 340v-2M158.5 340v-1M163.5 340v-1M164.5 340v-1M166.5 340v-1M170.5 340v-1M171.5 340v-1M173.5 340v-1M176.5 340v-2M179.5 340v-1M181.5 340v-2M184.5 340v-1M187.5 340v-1M188.5 340v-1M189.5 340v-1M191.5 340v-1M193.5 340v-1M195.5 340v-1M197.5 340v-1M203.5 340v-1M206.5 340v-1M209.5 340v-2M214.5 340v-2M217.5 340v-1M219.5 340v-2M222.5 340v-1M224.5 340v-2M226.5 340v-2M230.5 340v-2M232.5 340v-1M233.5 340v-1M236.5 340v-1M237.5 340v-1M242.5 340v-1M247.5 340v-1M250.5 340v-2M252.5 340v-2M258.5 340v-2M261.5 340v-2M270.5 340v-1M272.5 340v-2M275.5 340v-1M277.5 340v-1M283.5 340v-1M285.5 340v-1M287.5 340v-1M291.5 340v-1M295.5 340v-1M298.5 340v-2M300.5 340v-1M302.5 340v-2M329.5 340v-1M331.5 340v-2M334.5 340v-1M336.5 340v-1M337.5 340v-1M339.5 340v-1M341.5 340v-1M343.5 340v-1M344.5 340v-2M347.5 340v-2M349.5 340v-1M350.5 340v-1M355.5 340v-2M357.5 340v-1M360.5 340v-2M362.5 340v-1M363.5 340v-2M365.5 340v-1M367.5 340v-2M369.5 340v-2M372.5 340v-2M377.5 340v-2M379.5 340v-1M385.5 340v-1M387.5 340v-1M388.5 340v-1M390.5 340v-2M395.5 340v-1M397.5 340v-1M399.5 340v-1M400.5 340v-2M401.5 340v-1M404.5 340v-1M406.5 340v-1M411.5 340v-1M413.5 340v-1M420.5 340v-2M422.5 340v-2M427.5 340v-1M428.5 340v-2M430.5 340v-2M433.5 340v-2M435.5 340v-2M438.5 340v-1M440.5 340v-1M441.5 340v-2M443.5 340v-1M446.5 340v-1M448.5 340v-2M455.5 340v-1M458.5 340v-1M461.5 340v-1M463.5 340v-1M464.5 340v-1M466.5 340v-1M467.5 340v-2M470.5 340v-1M476.5 340v-2M479.5 340v-1M481.5 340v-1M485.5 340v-1M487.5 340v-2M489.5 340v-1M490.5 340v-1M493.5 340v-1M496.5 340v-1M498.5 340v-1M522.5 340v-1M523.5 340v-2M525.5 340v-1M527.5 340v-2M529.5 340v-1M531.5 340v-1M535.5 340v-2M536.5 340v-2M537.5 340v-1M539.5 340v-1M544.5 340v-2M547.5 340v-1M550.5 340v-2M552.5 340v-1M564.5 340v-2M567.5 340v-1M571.5 340v-2M574.5 340v-2M576.5 340v-2M579.5 340v-1M580.5 340v-1M581.5 340v-2M583.5 340v-1M587.5 340v-1M588.5 340v-1M593.5 340v-2M597.5 340v-2M598.5 340v-1M600.5 340v-1M601.5 340v-1M604.5 340v-2M606.5 340v-2M616.5 340v-1M619.5 340v-2M620.5 340v-1M625.5 340v-2M626.5 340v-1M628.5 340v-1M630.5 340v-1M631.5 340v-1M641.5 340v-1M644.5 340v-1M648.5 340v-1M653.5 340v-1M656.5 340v-2M658.5 340v-1M659.5 340v-2M663.5 340v-1M668.5 340v-1M678.5 340v-1M681.5 340v-2M683.5 340v-1M685.5 340v-1M690.5 340v-2M692.5 340v-1M693.5 340v-1M718.5 340v-1M721.5 340v-1M723.5 340v-1M724.5 340v-2M731.5 340v-1M733.5 340v-1M734.5 340v-2M738.5 340v-2M741.5 340v-2M743.5 340v-1M746.5 340v-1M749.5 340v-1M752.5 340v-2M754.5 340v-1M755.5 340v-1M760.5 340v-2M761.5 340v-1M763.5 340v-2M764.5 340v-2M770.5 340v-1M772.5 340v-1M774.5 340v-1M777.5 340v-2M779.5 340v-1M781.5 340v-1M784.5 340v-1M785.5 340v-1M786.5 340v-1M789.5 340v-1M792.5 340v-2M793.5 340v-1M795.5 340v-2M797.5 340v-1M800.5 340v-1M803.5 340v-2M805.5 340v-2M808.5 340v-1M810.5 340v-1M813.5 340v-1M815.5 340v-1M817.5 340v-1M825.5 340v-2M828.5 340v-1M831.5 340v-1M834.5 340v-1M836.5 340v-2M845.5 340v-1M847.5 340v-1M849.5 340v-1M852.5 340v-1M853.5 340v-1M856.5 340v-1M857.5 340v-2M860.5 340v-2M862.5 340v-2M864.5 340v-2M870.5 340v-1M872.5 340v-2M878.5 340v-1M881.5 340v-1M887.5 340v-1M889.5 340v-1M912.5 340v-1M914.5 340v-1M915.5 340v-1M917.5 340v-1M918.5 340v-1M919.5 340v-1M921.5 340v-1M923.5 340v-2M927.5 340v-2M928.5 340v-1M930.5 340v-1M932.5 340v-1M934.5 340v-1M937.5 340v-1M940.5 340v-1M943.5 340v-1M945.5 340v-1M947.5 340v-1M948.5 340v-2M950.5 340v-1M952.5 340v-1M955.5 340v-2M959.5 340v-1M960.5 340v-1M962.5 340v-1M964.5 340v-1M967.5 340v-1M969.5 340v-1M973.5 340v-1M975.5 340v-2M977.5 340v-2M982.5 340v-1M987.5 340v-2M992.5 340v-1M994.5 340v-1" stroke="#9fe8ef" stroke-width="1" fill="none" opacity="0.75"/>
<rect x="110" y="265.5" width="20" height="6" fill="#a8f0f4" opacity="0.9"/><rect x="305" y="265.5" width="20" height="6" fill="#a8f0f4" opacity="0.9"/><rect x="500" y="265.5" width="20" height="6" fill="#a8f0f4" opacity="0.9"/><rect x="695" y="265.5" width="20" height="6" fill="#a8f0f4" opacity="0.9"/><rect x="890" y="265.5" width="20" height="6" fill="#a8f0f4" opacity="0.9"/><path d="M112.5 268v3M114.5 268v3.5M118.5 268v3M126.5 268v3.5M311.5 268v3M313.5 268v3M502.5 268v3M504.5 268v3M508.5 268v3.5M514.5 268v3.5M697.5 268v3.5M699.5 268v3M703.5 268v3.5M709.5 268v3.5M894.5 268v3" stroke="#000" stroke-width="1" fill="none" opacity="0.6"/>
<path d="M24 340.5H110.5V305H111.5V271.5H130.5V340.5H305.5V305H306.5V271.5H325.5V340.5H500.5V305H501.5V271.5H520.5V340.5H695.5V305H696.5V271.5H715.5V340.5H890.5V305H891.5V271.5H910.5V340.5H995" stroke="#b0f4f8" stroke-width="1.3" fill="none"/>
<path d="M76.5 426v-4M94.5 426v-5M112.5 426v-5M113.5 426v-4M122.5 426v-5M156.5 426v-5M267.5 426v-4M272.5 426v-4M285.5 426v-5M286.5 426v-3M307.5 426v-3M309.5 426v-3M315.5 426v-5M319.5 426v-3M324.5 426v-5M329.5 426v-3M331.5 426v-3M341.5 426v-5M344.5 426v-5M348.5 426v-3M465.5 426v-4M467.5 426v-5M470.5 426v-3M489.5 426v-5M490.5 426v-5M494.5 426v-4M495.5 426v-3M498.5 426v-3M500.5 426v-5M503.5 426v-4M509.5 426v-5M513.5 426v-5M515.5 426v-5M519.5 426v-3M520.5 426v-5M527.5 426v-5M533.5 426v-4M539.5 426v-4M545.5 426v-3M547.5 426v-4M550.5 426v-3M669.5 426v-3M671.5 426v-4M673.5 426v-4M688.5 426v-5M690.5 426v-5M694.5 426v-4M696.5 426v-3M702.5 426v-5M703.5 426v-4M708.5 426v-4M726.5 426v-4M744.5 426v-4M856.5 426v-5M857.5 426v-3M862.5 426v-4M864.5 426v-4M866.5 426v-4M871.5 426v-3M885.5 426v-3M889.5 426v-3M893.5 426v-5M894.5 426v-3M898.5 426v-4M904.5 426v-4M908.5 426v-3M911.5 426v-3M913.5 426v-3M914.5 426v-4M915.5 426v-5M927.5 426v-5M938.5 426v-3M43.5 489v3M45.5 489v3M196.5 489v2M198.5 489v2M207.5 489v2M221.5 489v2M235.5 489v3M241.5 489v2M252.5 489v2M412.5 489v3M448.5 489v2M564.5 489v2M573.5 489v2M579.5 489v2M594.5 489v2M598.5 489v2M629.5 489v3M636.5 489v2M648.5 489v3M755.5 489v3M761.5 489v3M798.5 489v2M810.5 489v3M812.5 489v3M831.5 489v2M833.5 489v3M840.5 489v3M958.5 489v3M967.5 489v3M969.5 489v2M972.5 489v3M973.5 489v2M982.5 489v2M984.5 489v3M987.5 489v2" stroke="#d030e8" stroke-width="1" fill="none"/>
<path d="M24 488.5H65.5V426.5H163.5V488.5H260.5V426.5H358.5V488.5H455.5V426.5H553.5V488.5H650.5V426.5H748.5V488.5H845.5V426.5H943.5V488.5H995" stroke="#cc2ae6" stroke-width="1.3" fill="none"/>
<path d="M24.5 561.5H25.5V564.5H27.5V567.5H28.5V569.5H29.5V572.5H31.5V574.5H32.5V577.5H33.5V580.5H34.5V582.5H36.5V585.5H37.5V587.5H38.5V590.5H39.5V593.5H40.5V595.5H42.5V598.5H43.5V600.5H44.5V603.5H45.5V606.5H47.5V608.5H48.5V611.5H49.5V613.5H50.5V616.5H52.5V619.5H53.5V621.5H54.5V624.5H56.5V626.5H57.5V629.5H59.5V632.5H60.5V634.5H62.5V637.5H64.5V639.5H65.5V642.5H67.5V645.5H70.5V647.5H72.5V650.5H75.5V652.5H78.5V655.5H84.5V658.5H90.5V655.5H97.5V652.5H100.5V650.5H103.5V647.5H105.5V645.5H107.5V642.5H109.5V639.5H111.5V637.5H113.5V634.5H114.5V632.5H116.5V629.5H118.5V626.5H119.5V624.5H120.5V621.5H122.5V619.5H123.5V616.5H124.5V613.5H126.5V611.5H127.5V608.5H128.5V606.5H130.5V603.5H131.5V600.5H132.5V598.5H133.5V595.5H134.5V593.5H136.5V590.5H137.5V587.5H138.5V585.5H139.5V582.5H141.5V580.5H142.5V577.5H143.5V574.5H144.5V572.5H145.5V569.5H147.5V567.5H148.5V564.5H149.5V561.5H151.5V559.5H152.5V556.5H154.5V554.5H155.5V551.5H157.5V548.5H158.5V546.5H160.5V543.5H161.5V541.5H163.5V538.5H165.5V535.5H167.5V533.5H170.5V530.5H173.5V528.5H176.5V525.5H193.5V528.5H197.5V530.5H200.5V533.5H202.5V535.5H205.5V538.5H207.5V541.5H208.5V543.5H210.5V546.5H212.5V548.5H213.5V551.5H215.5V554.5H216.5V556.5H218.5V559.5H219.5V561.5H220.5V564.5H222.5V567.5H223.5V569.5H224.5V572.5H226.5V574.5H227.5V577.5H228.5V580.5H229.5V582.5H231.5V585.5H232.5V587.5H233.5V590.5H234.5V593.5H235.5V595.5H237.5V598.5H238.5V600.5H239.5V603.5H240.5V606.5H242.5V608.5H243.5V611.5H244.5V613.5H245.5V616.5H247.5V619.5H248.5V621.5H249.5V624.5H251.5V626.5H252.5V629.5H254.5V632.5H255.5V634.5H257.5V637.5H259.5V639.5H260.5V642.5H262.5V645.5H265.5V647.5H267.5V650.5H270.5V652.5H273.5V655.5H279.5V658.5H285.5V655.5H292.5V652.5H295.5V650.5H298.5V647.5H300.5V645.5H302.5V642.5H304.5V639.5H306.5V637.5H308.5V634.5H309.5V632.5H311.5V629.5H313.5V626.5H314.5V624.5H315.5V621.5H317.5V619.5H318.5V616.5H319.5V613.5H321.5V611.5H322.5V608.5H323.5V606.5H325.5V603.5H326.5V600.5H327.5V598.5H328.5V595.5H329.5V593.5H331.5V590.5H332.5V587.5H333.5V585.5H334.5V582.5H336.5V580.5H337.5V577.5H338.5V574.5H339.5V572.5H340.5V569.5H342.5V567.5H343.5V564.5H344.5V561.5H346.5V559.5H347.5V556.5H349.5V554.5H350.5V551.5H352.5V548.5H353.5V546.5H355.5V543.5H356.5V541.5H358.5V538.5H360.5V535.5H362.5V533.5H365.5V530.5H368.5V528.5H371.5V525.5H388.5V528.5H392.5V530.5H395.5V533.5H397.5V535.5H400.5V538.5H402.5V541.5H403.5V543.5H405.5V546.5H407.5V548.5H408.5V551.5H410.5V554.5H411.5V556.5H413.5V559.5H414.5V561.5H415.5V564.5H417.5V567.5H418.5V569.5H419.5V572.5H421.5V574.5H422.5V577.5H423.5V580.5H424.5V582.5H426.5V585.5H427.5V587.5H428.5V590.5H429.5V593.5H430.5V595.5H432.5V598.5H433.5V600.5H434.5V603.5H435.5V606.5H437.5V608.5H438.5V611.5H439.5V613.5H440.5V616.5H442.5V619.5H443.5V621.5H444.5V624.5H446.5V626.5H447.5V629.5H449.5V632.5H450.5V634.5H452.5V637.5H454.5V639.5H455.5V642.5H457.5V645.5H460.5V647.5H462.5V650.5H465.5V652.5H468.5V655.5H474.5V658.5H480.5V655.5H487.5V652.5H490.5V650.5H493.5V647.5H495.5V645.5H497.5V642.5H499.5V639.5H501.5V637.5H503.5V634.5H504.5V632.5H506.5V629.5H508.5V626.5H509.5V624.5H510.5V621.5H512.5V619.5H513.5V616.5H514.5V613.5H516.5V611.5H517.5V608.5H518.5V606.5H520.5V603.5H521.5V600.5H522.5V598.5H523.5V595.5H524.5V593.5H526.5V590.5H527.5V587.5H528.5V585.5H529.5V582.5H531.5V580.5H532.5V577.5H533.5V574.5H534.5V572.5H535.5V569.5H537.5V567.5H538.5V564.5H539.5V561.5H541.5V559.5H542.5V556.5H544.5V554.5H545.5V551.5H547.5V548.5H548.5V546.5H550.5V543.5H551.5V541.5H553.5V538.5H555.5V535.5H557.5V533.5H560.5V530.5H563.5V528.5H566.5V525.5H583.5V528.5H587.5V530.5H590.5V533.5H592.5V535.5H595.5V538.5H597.5V541.5H598.5V543.5H600.5V546.5H602.5V548.5H603.5V551.5H605.5V554.5H606.5V556.5H608.5V559.5H609.5V561.5H610.5V564.5H612.5V567.5H613.5V569.5H614.5V572.5H616.5V574.5H617.5V577.5H618.5V580.5H619.5V582.5H621.5V585.5H622.5V587.5H623.5V590.5H624.5V593.5H625.5V595.5H627.5V598.5H628.5V600.5H629.5V603.5H630.5V606.5H632.5V608.5H633.5V611.5H634.5V613.5H635.5V616.5H637.5V619.5H638.5V621.5H639.5V624.5H641.5V626.5H642.5V629.5H644.5V632.5H645.5V634.5H647.5V637.5H649.5V639.5H650.5V642.5H652.5V645.5H655.5V647.5H657.5V650.5H660.5V652.5H663.5V655.5H669.5V658.5H675.5V655.5H682.5V652.5H685.5V650.5H688.5V647.5H690.5V645.5H692.5V642.5H694.5V639.5H696.5V637.5H698.5V634.5H699.5V632.5H701.5V629.5H703.5V626.5H704.5V624.5H705.5V621.5H707.5V619.5H708.5V616.5H709.5V613.5H711.5V611.5H712.5V608.5H713.5V606.5H715.5V603.5H716.5V600.5H717.5V598.5H718.5V595.5H719.5V593.5H721.5V590.5H722.5V587.5H723.5V585.5H724.5V582.5H726.5V580.5H727.5V577.5H728.5V574.5H729.5V572.5H730.5V569.5H732.5V567.5H733.5V564.5H734.5V561.5H736.5V559.5H737.5V556.5H739.5V554.5H740.5V551.5H742.5V548.5H743.5V546.5H745.5V543.5H746.5V541.5H748.5V538.5H750.5V535.5H752.5V533.5H755.5V530.5H758.5V528.5H761.5V525.5H778.5V528.5H782.5V530.5H785.5V533.5H787.5V535.5H790.5V538.5H792.5V541.5H793.5V543.5H795.5V546.5H797.5V548.5H798.5V551.5H800.5V554.5H801.5V556.5H803.5V559.5H804.5V561.5H805.5V564.5H807.5V567.5H808.5V569.5H809.5V572.5H811.5V574.5H812.5V577.5H813.5V580.5H814.5V582.5H816.5V585.5H817.5V587.5H818.5V590.5H819.5V593.5H820.5V595.5H822.5V598.5H823.5V600.5H824.5V603.5H825.5V606.5H827.5V608.5H828.5V611.5H829.5V613.5H830.5V616.5H832.5V619.5H833.5V621.5H834.5V624.5H836.5V626.5H837.5V629.5H839.5V632.5H840.5V634.5H842.5V637.5H844.5V639.5H845.5V642.5H847.5V645.5H850.5V647.5H852.5V650.5H855.5V652.5H858.5V655.5H864.5V658.5H870.5V655.5H877.5V652.5H880.5V650.5H883.5V647.5H885.5V645.5H887.5V642.5H889.5V639.5H891.5V637.5H893.5V634.5H894.5V632.5H896.5V629.5H898.5V626.5H899.5V624.5H900.5V621.5H902.5V619.5H903.5V616.5H904.5V613.5H906.5V611.5H907.5V608.5H908.5V606.5H910.5V603.5H911.5V600.5H912.5V598.5H913.5V595.5H914.5V593.5H916.5V590.5H917.5V587.5H918.5V585.5H919.5V582.5H921.5V580.5H922.5V577.5H923.5V574.5H924.5V572.5H925.5V569.5H927.5V567.5H928.5V564.5H929.5V561.5H931.5V559.5H932.5V556.5H934.5V554.5H935.5V551.5H937.5V548.5H938.5V546.5H940.5V543.5H941.5V541.5H943.5V538.5H945.5V535.5H947.5V533.5H950.5V530.5H953.5V528.5H956.5V525.5H973.5V528.5H977.5V530.5H980.5V533.5H982.5V535.5H985.5V538.5H987.5V541.5H988.5V543.5H990.5V546.5H992.5V548.5H993.5V551.5H995" stroke="#bcf47a" stroke-width="1.3" fill="none"/>
<path d="M24.5 221.5H29.5V224.5H34.5V228.5H38.5V231.5H43.5V235.5H48.5V238.5H53.5V242.5H58.5V245.5H66.5V242.5H71.5V238.5H76.5V235.5H81.5V231.5H86.5V228.5H91.5V224.5H96.5V221.5H101.5V217.5H105.5V214.5H110.5V210.5H115.5V207.5H120.5V203.5H125.5V200.5H130.5V196.5H135.5V193.5H140.5V189.5H144.5V186.5H149.5V182.5H154.5V179.5H159.5V175.5H160.5V179.5H165.5V182.5H170.5V186.5H175.5V189.5H180.5V193.5H185.5V196.5H190.5V200.5H194.5V203.5H199.5V207.5H204.5V210.5H209.5V214.5H214.5V217.5H219.5V221.5H224.5V224.5H229.5V228.5H233.5V231.5H238.5V235.5H243.5V238.5H248.5V242.5H253.5V245.5H261.5V242.5H266.5V238.5H271.5V235.5H276.5V231.5H281.5V228.5H286.5V224.5H291.5V221.5H296.5V217.5H300.5V214.5H305.5V210.5H310.5V207.5H315.5V203.5H320.5V200.5H325.5V196.5H330.5V193.5H335.5V189.5H339.5V186.5H344.5V182.5H349.5V179.5H354.5V175.5H355.5V179.5H360.5V182.5H365.5V186.5H370.5V189.5H375.5V193.5H380.5V196.5H385.5V200.5H389.5V203.5H394.5V207.5H399.5V210.5H404.5V214.5H409.5V217.5H414.5V221.5H419.5V224.5H424.5V228.5H428.5V231.5H433.5V235.5H438.5V238.5H443.5V242.5H448.5V245.5H456.5V242.5H461.5V238.5H466.5V235.5H471.5V231.5H476.5V228.5H481.5V224.5H486.5V221.5H491.5V217.5H495.5V214.5H500.5V210.5H505.5V207.5H510.5V203.5H515.5V200.5H520.5V196.5H525.5V193.5H530.5V189.5H534.5V186.5H539.5V182.5H544.5V179.5H549.5V175.5H550.5V179.5H555.5V182.5H560.5V186.5H565.5V189.5H570.5V193.5H575.5V196.5H580.5V200.5H584.5V203.5H589.5V207.5H594.5V210.5H599.5V214.5H604.5V217.5H609.5V221.5H614.5V224.5H619.5V228.5H623.5V231.5H628.5V235.5H633.5V238.5H638.5V242.5H643.5V245.5H651.5V242.5H656.5V238.5H661.5V235.5H666.5V231.5H671.5V228.5H676.5V224.5H681.5V221.5H686.5V217.5H690.5V214.5H695.5V210.5H700.5V207.5H705.5V203.5H710.5V200.5H715.5V196.5H720.5V193.5H725.5V189.5H729.5V186.5H734.5V182.5H739.5V179.5H744.5V175.5H745.5V179.5H750.5V182.5H755.5V186.5H760.5V189.5H765.5V193.5H770.5V196.5H775.5V200.5H779.5V203.5H784.5V207.5H789.5V210.5H794.5V214.5H799.5V217.5H804.5V221.5H809.5V224.5H814.5V228.5H818.5V231.5H823.5V235.5H828.5V238.5H833.5V242.5H838.5V245.5H846.5V242.5H851.5V238.5H856.5V235.5H861.5V231.5H866.5V228.5H871.5V224.5H876.5V221.5H881.5V217.5H885.5V214.5H890.5V210.5H895.5V207.5H900.5V203.5H905.5V200.5H910.5V196.5H915.5V193.5H920.5V189.5H924.5V186.5H929.5V182.5H934.5V179.5H939.5V175.5H940.5V179.5H945.5V182.5H950.5V186.5H955.5V189.5H960.5V193.5H965.5V196.5H970.5V200.5H974.5V203.5H979.5V207.5H984.5V210.5H989.5V214.5H994.5V217.5H995" stroke="#f8f880" stroke-width="1.3" fill="none"/>
<path d="M4 195 h11 l6 5.5 l-6 5.5 h-11z" fill="#f5f53a"/><text x="9.5" y="204.3" font-size="10" text-anchor="middle" fill="#000">1</text>
<path d="M4 316 h11 l6 5.5 l-6 5.5 h-11z" fill="#9ff0f4"/><text x="9.5" y="325.3" font-size="10" text-anchor="middle" fill="#000">2</text>
<path d="M4 442.3 h11 l6 5.5 l-6 5.5 h-11z" fill="#e010f0"/><text x="9.5" y="451.6" font-size="10" text-anchor="middle" fill="#7a007a">3</text>
<path d="M4 582 h11 l6 5.5 l-6 5.5 h-11z" fill="#9cf040"/><text x="9.5" y="591.3" font-size="10" text-anchor="middle" fill="#000">4</text>
<path d="M1016 195 h-11 l-6 5.5 l6 5.5 h11z" fill="#f5f53a"/>
<text x="1009" y="204.5" font-size="10" text-anchor="middle" fill="#333">T</text>
<path d="M504 123 h11 v9.5 l-5.5 5 l-5.5 -5z" fill="#f09a30"/>
<rect x="3.5" y="96" width="50.5" height="21" fill="#000"/>
<path d="M171.5 114.5h8v-16h8v16h12" stroke="#c8e850" stroke-width="1" fill="none"/>
<path d="M172 115.5h7M188 115.5h11" stroke="#c8e850" stroke-width="1" stroke-dasharray="1 1" fill="none"/>
<rect x="442.5" y="95" width="133.5" height="23" fill="#000"/>
<path d="M448 102.5h-2.5v13h2.5M570.5 102.5h2.5v13h-2.5" stroke="#e8e8d0" stroke-width="1" fill="none"/>
<path d="M446 107.5L450.5 111.5L455 107L459.5 111.5L464 107L468.5 111.5L473 107L477.5 111.5L482 107L486.5 111.5L491 107L495.5 111.5L500 107L504.5 111.5L509 107L513.5 111.5L518 107L522.5 111.5L527 107L531.5 111.5L536 107L540.5 111.5L545 107L549.5 111.5L554 107L558.5 111.5L563 107L567.5 111.5L572 107" stroke="url(#zg)" stroke-width="1" fill="none"/>
<text x="509.5" y="102.5" font-size="8" text-anchor="middle" fill="#e08a30">T</text>
<rect x="915" y="96" width="101" height="21.5" fill="#000"/>
<path d="M919 115.5h4.5v-16h4.5" stroke="#f0f040" stroke-width="1.2" fill="none"/><path d="M920 109 l3.5 -4 l3.5 4z" fill="#f0f040"/>
<rect x="934" y="100" width="27" height="15" fill="#f5f53a"/>
<rect x="906" y="686.5" width="90" height="18" fill="#000"/>
<rect x="23" y="686.5" width="91.5" height="18.5" fill="#000"/>
<rect x="132.5" y="686.5" width="92" height="18.5" fill="#000"/>
<rect x="243" y="686.5" width="91" height="18.5" fill="#000"/>
<rect x="352.5" y="686.5" width="92" height="18.5" fill="#000"/>
<rect x="353.5" y="687.5" width="26.5" height="16.5" fill="#9cf040"/>
<text x="509.5" y="133" font-size="10" text-anchor="middle" fill="#111">T</text>
</svg>
<div class="a" style="left:12.3px;top:101.04px;font-size:12px;line-height:12px;color:#9ee24a;">Trig'D</div>
<div class="a" style="left:935.5px;top:101.64px;font-size:12px;line-height:12px;color:#000;">CH1</div>
<div class="a" style="left:972px;top:101.9px;font-size:11.7px;line-height:11.7px;color:#f5f53a;">0.00uV</div>
<div class="a" style="left:25px;top:690.27px;font-size:12.2px;line-height:12.2px;color:#f0f060;">CH1</div>
<div class="a" style="left:68px;top:690.27px;font-size:12.2px;line-height:12.2px;color:#f0f060;">200mV</div>
<div class="a" style="left:135.5px;top:690.27px;font-size:12.2px;line-height:12.2px;color:#a8e4f0;">CH2</div>
<div class="a" style="left:178px;top:690.27px;font-size:12.2px;line-height:12.2px;color:#a8e4f0;">200mV</div>
<div class="a" style="left:245px;top:690.27px;font-size:12.2px;line-height:12.2px;color:#c030d8;">CH3</div>
<div class="a" style="left:292.5px;top:690.27px;font-size:12.2px;line-height:12.2px;color:#c030d8;">2.00V</div>
<div class="a" style="left:354.5px;top:690.27px;font-size:12.2px;line-height:12.2px;color:#000;">CH4</div>
<div class="a" style="left:401.5px;top:690.27px;font-size:12.2px;line-height:12.2px;color:#9cf040;">2.00V</div>
<div class="a" style="left:907.5px;top:690.02px;font-size:12.5px;line-height:12.5px;color:#e0903a;">Time: 500.0us</div>
<svg class="a" style="left:0;top:680px" width="460" height="30" viewBox="0 680 460 30"><path d="M53.5 697.5 C54.5 692 57.0 692 58.0 695.5 C59.0 699 61.5 699 62.5 693" stroke="#f0f060" stroke-width="1.2" fill="none"/><path d="M163.5 697.5 C164.5 692 167.0 692 168.0 695.5 C169.0 699 171.5 699 172.5 693" stroke="#a8e4f0" stroke-width="1.2" fill="none"/><path d="M273.5 697.5 C274.5 692 277.0 692 278.0 695.5 C279.0 699 281.5 699 282.5 693" stroke="#c030d8" stroke-width="1.2" fill="none"/><path d="M383.5 697.5 C384.5 692 387.0 692 388.0 695.5 C389.0 699 391.5 699 392.5 693" stroke="#d8e8d0" stroke-width="1.2" fill="none"/></svg>
<svg class="a" style="left:1017px;top:92px" width="196" height="639" viewBox="1017 92 196 639" font-family="Liberation Sans, sans-serif">
<defs><radialGradient id="ring" cx="0.5" cy="0.5" r="0.5"><stop offset="0.8" stop-color="#bcbcbc"/><stop offset="0.9" stop-color="#a4a4a4"/><stop offset="1" stop-color="#7a7a7a"/></radialGradient></defs>
<rect x="1017" y="92" width="196" height="639" fill="#f0f0f0"/>
<rect x="1017" y="92" width="196" height="1" fill="#b8b8b8"/>
<rect x="1017" y="93" width="2.5" height="616" fill="#fbfbfb"/>
<circle cx="1087.2" cy="108" r="10.3" fill="#a6a6a6" stroke="#6a6a6a" stroke-width="1"/>
<rect x="1019.5" y="122" width="194" height="1" fill="#dadada"/>
<rect x="1019.5" y="123" width="194" height="1" fill="#ffffff"/>
<rect x="1020" y="124" width="1" height="586" fill="#e2e2e2"/>
<!-- scrollbar -->
<rect x="1197" y="124" width="16" height="586" fill="#f0f0f0"/><rect x="1211" y="124" width="2" height="586" fill="#fafafa"/>
<rect x="1198" y="140" width="13" height="423" fill="#cdcdcd"/>
<path d="M1201.5 134.5 l3.5 -3.5 l3.5 3.5" stroke="#555" stroke-width="1.6" fill="none"/>
<!-- group boxes -->
<rect x="1025.5" y="134.5" width="167" height="110" fill="none" stroke="#dcdcdc"/>
<rect x="1026.5" y="135.5" width="165" height="108" fill="none" stroke="#fff" stroke-width="0.8"/>
<rect x="1025.5" y="259.5" width="167" height="149" fill="none" stroke="#dcdcdc"/>
<rect x="1026.5" y="260.5" width="165" height="147" fill="none" stroke="#fff" stroke-width="0.8"/>
<rect x="1025.5" y="421.5" width="167" height="239.5" fill="none" stroke="#dcdcdc"/>
<rect x="1026.5" y="422.5" width="165" height="237.5" fill="none" stroke="#fff" stroke-width="0.8"/>
<rect x="1032" y="128" width="52" height="12" fill="#f0f0f0"/>
<rect x="1032" y="253" width="40" height="12" fill="#f0f0f0"/>
<rect x="1032" y="415" width="38" height="12" fill="#f0f0f0"/>
<rect x="1029.0" y="167.5" width="66.0" height="20.5" fill="#e6e6e6" stroke="#adadad"/><path d="M1082.5 175.75 l4 4 l4 -4" stroke="#444" stroke-width="1.1" fill="none"/>
<rect x="1029.0" y="217.0" width="66.0" height="20.0" fill="#e6e6e6" stroke="#adadad"/><path d="M1082.5 225 l4 4 l4 -4" stroke="#444" stroke-width="1.1" fill="none"/>
<rect x="1029.0" y="276.0" width="66.0" height="20.0" fill="#e6e6e6" stroke="#adadad"/><path d="M1082.5 284 l4 4 l4 -4" stroke="#444" stroke-width="1.1" fill="none"/>
<rect x="1029.0" y="330.5" width="66.0" height="20.5" fill="#e6e6e6" stroke="#adadad"/><path d="M1082.5 338.75 l4 4 l4 -4" stroke="#444" stroke-width="1.1" fill="none"/>
<rect x="1029.0" y="358.5" width="66.0" height="20.5" fill="#e6e6e6" stroke="#adadad"/><path d="M1082.5 366.75 l4 4 l4 -4" stroke="#444" stroke-width="1.1" fill="none"/>
<rect x="1028.5" y="303.5" width="67" height="20" fill="#fff" stroke="#adadad"/>
<rect x="1079.5" y="304.5" width="14" height="9" fill="#f0f0f0" stroke="#c8c8c8" stroke-width="0.8"/>
<rect x="1079.5" y="313.5" width="14" height="9" fill="#f0f0f0" stroke="#c8c8c8" stroke-width="0.8"/>
<path d="M1083.5 311 l3 -3.5 l3 3.5z M1083.5 316 l3 3.5 l3 -3.5z" fill="#222"/>
<rect x="1101.5" y="277.5" width="12" height="12" fill="#fff" stroke="#333"/>
<path d="M1103.5 283.5 l3 3.2 l5 -7" stroke="#222" stroke-width="1.2" fill="none"/>
<rect x="1115.5" y="436.5" width="67" height="20.5" fill="#e6e6e6" stroke="#adadad"/><path d="M1170 444.75 l4 4 l4 -4" stroke="#444" stroke-width="1.1" fill="none"/>
<rect x="1115.5" y="466.5" width="67" height="20.5" fill="#e6e6e6" stroke="#adadad"/><path d="M1170 474.75 l4 4 l4 -4" stroke="#444" stroke-width="1.1" fill="none"/>
<rect x="1115.5" y="496.5" width="67" height="21" fill="#e6e6e6" stroke="#adadad"/><path d="M1170 505 l4 4 l4 -4" stroke="#444" stroke-width="1.1" fill="none"/>
<rect x="1115.5" y="528.0" width="67" height="20.5" fill="#e6e6e6" stroke="#adadad"/><path d="M1170 536.25 l4 4 l4 -4" stroke="#444" stroke-width="1.1" fill="none"/>
<path d="M1118.4 216.6 A37.6 37.6 0 1 1 1171.6 216.6" stroke="#222" stroke-width="1.2" fill="none"/><path d="M1118.4 216.6 l-5 5 M1171.6 216.6 l5 5" stroke="#111" stroke-width="1.6"/><circle cx="1145" cy="190" r="36.6" fill="#fff"/><circle cx="1145" cy="190" r="35.8" fill="url(#ring)" stroke="#8a8a8a" stroke-width="0.8"/><circle cx="1145" cy="190" r="29" fill="#14089a"/><circle cx="1145" cy="190" r="26.6" fill="#1c08d6"/><path d="M1150 167 L1146.7 182.4" stroke="#d0d0c0" stroke-width="2"/>
<path d="M1118.4 366.6 A37.6 37.6 0 1 1 1171.6 366.6" stroke="#222" stroke-width="1.2" fill="none"/><path d="M1118.4 366.6 l-5 5 M1171.6 366.6 l5 5" stroke="#111" stroke-width="1.6"/><circle cx="1145" cy="340" r="36.6" fill="#fff"/><circle cx="1145" cy="340" r="35.8" fill="url(#ring)" stroke="#8a8a8a" stroke-width="0.8"/><circle cx="1145" cy="340" r="29" fill="#3c8c12"/><circle cx="1145" cy="340" r="26.6" fill="#98f030"/><path d="M1121 338.6 L1137.2 339.2" stroke="#8a3aa8" stroke-width="2"/>
<path d="M1110 708.5 V704 q0 -2.5 2.5 -2.5 H1185 q2.5 0 2.5 2.5 V710" stroke="#dcdcdc" fill="none"/>
<path d="M1110 708.3 H1176" stroke="#8a8a8a" stroke-width="1"/>
</svg>
<div class="a" style="left:1029.5px;top:103.16px;font-size:10.8px;line-height:10.8px;color:#000;">Connect:</div>
<div class="a" style="left:1034.8px;top:128.86px;font-size:10.8px;line-height:10.8px;color:#000;">Horizontal</div>
<div class="a" style="left:1028.7px;top:149.66px;font-size:10.8px;line-height:10.8px;color:#000;">Time / DIV</div>
<div class="a" style="left:1032px;top:172.69px;font-size:11px;line-height:11px;color:#000;">500.0us</div>
<div class="a" style="left:1028.6px;top:196.86px;font-size:10.8px;line-height:10.8px;color:#000;">Format</div>
<div class="a" style="left:1032px;top:222.19px;font-size:11px;line-height:11px;color:#4a4a4a;">Y - T</div>
<div class="a" style="left:1034.5px;top:252.76px;font-size:10.8px;line-height:10.8px;color:#000;">Vertical</div>
<div class="a" style="left:1032px;top:281.19px;font-size:11px;line-height:11px;color:#000;">CH4</div>
<div class="a" style="left:1117.3px;top:279.24px;font-size:10px;line-height:10px;color:#000;">ON/OFF</div>
<div class="a" style="left:1031.5px;top:308.69px;font-size:11px;line-height:11px;color:#000;">2.00V</div>
<div class="a" style="left:1032px;top:336.19px;font-size:11px;line-height:11px;color:#000;">AC</div>
<div class="a" style="left:1032px;top:364.19px;font-size:11px;line-height:11px;color:#000;">x1</div>
<div class="a" style="left:1034.5px;top:416.06px;font-size:10.8px;line-height:10.8px;color:#000;">Trigger</div>
<div class="a" style="left:1028.3px;top:441.66px;font-size:10.8px;line-height:10.8px;color:#000;">Trigger Mode</div>
<div class="a" style="left:1028.3px;top:471.86px;font-size:10.8px;line-height:10.8px;color:#000;">Trigger Sweep</div>
<div class="a" style="left:1028.3px;top:502.06px;font-size:10.8px;line-height:10.8px;color:#000;">Trigger Source</div>
<div class="a" style="left:1028.3px;top:530.96px;font-size:10.8px;line-height:10.8px;color:#000;">Trigger Slope</div>
<div class="a" style="left:1119px;top:441.49px;font-size:11px;line-height:11px;color:#000;">Edge</div>
<div class="a" style="left:1119px;top:471.69px;font-size:11px;line-height:11px;color:#000;">AUTO</div>
<div class="a" style="left:1119px;top:501.89px;font-size:11px;line-height:11px;color:#000;">CH1</div>
<div class="a" style="left:1119px;top:532.19px;font-size:11px;line-height:11px;color:#000;">+</div>
<div class="a" style="left:1029.2px;top:695.77px;font-size:10.9px;line-height:10.9px;color:#000;">Move Waveform</div>
<div class="a" style="left:0;top:708px;width:1213px;height:23px;background:#f0f0f0"></div>
<div class="a" style="left:0;top:729px;width:1213px;height:2px;background:#c6c6c6"></div>
<div class="a" style="left:1083px;top:711px;width:1px;height:18px;background:#d4d4d4"></div>
<div class="a" style="left:2.3px;top:714.53px;font-size:12.6px;line-height:12.6px;color:#000;">Connected</div>
<div class="a" style="left:1088px;top:708px;width:103px;height:21px;overflow:hidden"><div class="a" style="left:0;top:6.95px;font-size:12.7px;line-height:12.7px">16-04-2016</div><div class="a" style="left:74.5px;top:6.95px;font-size:12.7px;line-height:12.7px">11:06</div></div>
<svg class="a" style="left:1198px;top:716px" width="14" height="13"><g fill="#bdbdbd"><rect x="9" y="1" width="2" height="2"/><rect x="5" y="5" width="2" height="2"/><rect x="9" y="5" width="2" height="2"/><rect x="1" y="9" width="2" height="2"/><rect x="5" y="9" width="2" height="2"/><rect x="9" y="9" width="2" height="2"/></g></svg>
<div class="a" style="left:0;top:93px;width:2px;height:615px;background:#c8c8c8"></div>
<div class="a" style="left:0;top:708px;width:1213px;height:1px;background:#fbfbfb"></div>
<div class="a" style="left:1211px;top:0;width:2px;height:731px;background:#d6d3da"></div>
</body></html>
